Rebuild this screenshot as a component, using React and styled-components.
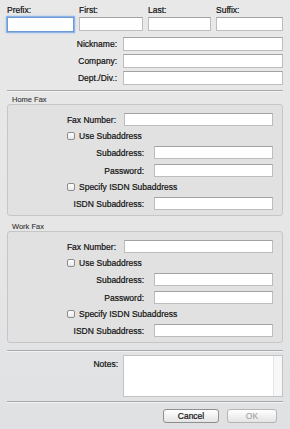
import React from 'react'
import styled, { createGlobalStyle } from 'styled-components';

const Global = createGlobalStyle`
    html, body {
        margin: 0;
        padding: 0;
        background: #e6e6e6;
    }
    * {
        box-sizing: border-box;
    }
`;

const Sheet = styled.div`
    width: 290px;
    height: 429px;
    overflow: hidden;
    padding: 5px 7px 0 7px;
    background: linear-gradient(180deg, #e8e8e8 0%, #e6e6e6 55%, #dfe1e3 100%);
    font-family: "Liberation Sans", Arial, sans-serif;
    font-size: 8.5px;
    color: #111;
    -webkit-text-stroke: 0.2px #111;
    display: flex;
    flex-direction: column;
`;

const NameGrid = styled.div`
    display: grid;
    grid-template-columns: 67px 64px 63px 67px;
    column-gap: 5px;
    row-gap: 2px;
`;

const NameLabel = styled.div`
    height: 10px;
    line-height: 10px;
`;

const Input = styled.div`
    height: ${p => p.h || 13}px;
    flex: 1;
    background: #fff;
    border: 1px solid #bdbdbd;
    border-top-color: #a3a3a3;
    box-shadow: ${p => p.focused ? '0 0 0 1px #8fb3e3, 0 0 2px 1px #a9c6ee' : 'none'};
    border-color: ${p => p.focused ? '#6d9bd8' : undefined};
`;

const Fields = styled.div`
    display: flex;
    flex-direction: column;
    gap: 3px;
    margin-top: 5px;
`;

const Row = styled.div`
    display: flex;
    align-items: center;
    gap: ${p => p.gap}px;
`;

const Label = styled.div`
    width: ${p => p.w}px;
    text-align: right;
    white-space: nowrap;
    flex: none;
`;

const Rule = styled.div`
    height: 2px;
    border-top: 1px solid #a9a9a9;
    border-bottom: 1px solid #f3f3f3;
    margin-top: ${p => p.top}px;
`;

const GroupTitle = styled.div`
    font-size: 7.5px;
    color: #333;
    -webkit-text-stroke: 0.1px #333;
    height: 9px;
    line-height: 9px;
    padding-left: 5px;
    margin-top: ${p => p.top}px;
`;

const Group = styled.div`
    border: 1px solid #c6c6c6;
    border-radius: 3px;
    background: #e1e1e1;
    padding: 8px 9px 5px 0;
    display: flex;
    flex-direction: column;
    gap: 5px;
`;

const CheckRow = styled.label`
    display: flex;
    align-items: center;
    gap: 4px;
    height: 10px;
    padding-left: 59px;
`;

const Box = styled.span`
    width: 8px;
    height: 8px;
    border: 1px solid #8c8c8c;
    border-radius: 2px;
    background: linear-gradient(180deg, #ffffff, #e9e9e9);
    flex: none;
`;

const NotesRow = styled.div`
    display: flex;
    gap: 5px;
    margin-top: 3px;
`;

const NotesLabel = styled.div`
    width: 111px;
    text-align: right;
    padding-top: 4px;
`;

const NotesArea = styled.div`
    flex: 1;
    height: 42px;
    background: #fff;
    border: 1px solid #c3c3c3;
    display: flex;
    justify-content: flex-end;
`;

const Scroll = styled.div`
    width: 9px;
    background: #f7f7f7;
    border-left: 1px solid #e6e6e6;
`;

const Buttons = styled.div`
    display: flex;
    justify-content: flex-end;
    gap: 8px;
    margin-top: 6px;
    padding-right: 6px;
`;

const Button = styled.div`
    width: ${p => p.w}px;
    height: 14px;
    line-height: 12px;
    text-align: center;
    border: 1px solid ${p => p.disabled ? '#b5b5b5' : '#8f8f8f'};
    border-radius: 3px;
    background: linear-gradient(180deg, #ffffff 0%, #f1f1f1 50%, #e4e4e4 100%);
    color: ${p => p.disabled ? '#a6a6a6' : '#111'};
    -webkit-text-stroke: 0.2px ${p => p.disabled ? '#a6a6a6' : '#111'};
`;

function FaxGroup() {
    return (
        <Group>
            <Row gap={8}>
                <Label w={108}>Fax Number:</Label>
                <Input />
            </Row>
            <CheckRow><Box />Use Subaddress</CheckRow>
            <Row gap={10}>
                <Label w={136}>Subaddress:</Label>
                <Input />
            </Row>
            <Row gap={10}>
                <Label w={136}>Password:</Label>
                <Input />
            </Row>
            <CheckRow><Box />Specify ISDN Subaddress</CheckRow>
            <Row gap={10}>
                <Label w={136}>ISDN Subaddress:</Label>
                <Input />
            </Row>
        </Group>
    )
}

export default function App() {
    return (
        <Sheet>
            <Global />
            <NameGrid>
                <NameLabel>Prefix:</NameLabel>
                <NameLabel>First:</NameLabel>
                <NameLabel>Last:</NameLabel>
                <NameLabel>Suffix:</NameLabel>
                <Input h={15} focused />
                <Input h={14} />
                <Input h={14} />
                <Input h={14} />
            </NameGrid>
            <Fields>
                <Row gap={6}>
                    <Label w={110}>Nickname:</Label>
                    <Input h={14} />
                </Row>
                <Row gap={6}>
                    <Label w={110}>Company:</Label>
                    <Input h={14} />
                </Row>
                <Row gap={6}>
                    <Label w={110}>Dept./Div.:</Label>
                    <Input h={14} />
                </Row>
            </Fields>
            <Rule top={5} />
            <GroupTitle top={3}>Home Fax</GroupTitle>
            <FaxGroup />
            <GroupTitle top={6}>Work Fax</GroupTitle>
            <FaxGroup />
            <Rule top={7} />
            <NotesRow>
                <NotesLabel>Notes:</NotesLabel>
                <NotesArea><Scroll /></NotesArea>
            </NotesRow>
            <Rule top={4} />
            <Buttons>
                <Button w={56}>Cancel</Button>
                <Button w={50} disabled>OK</Button>
            </Buttons>
        </Sheet>
    )
}
